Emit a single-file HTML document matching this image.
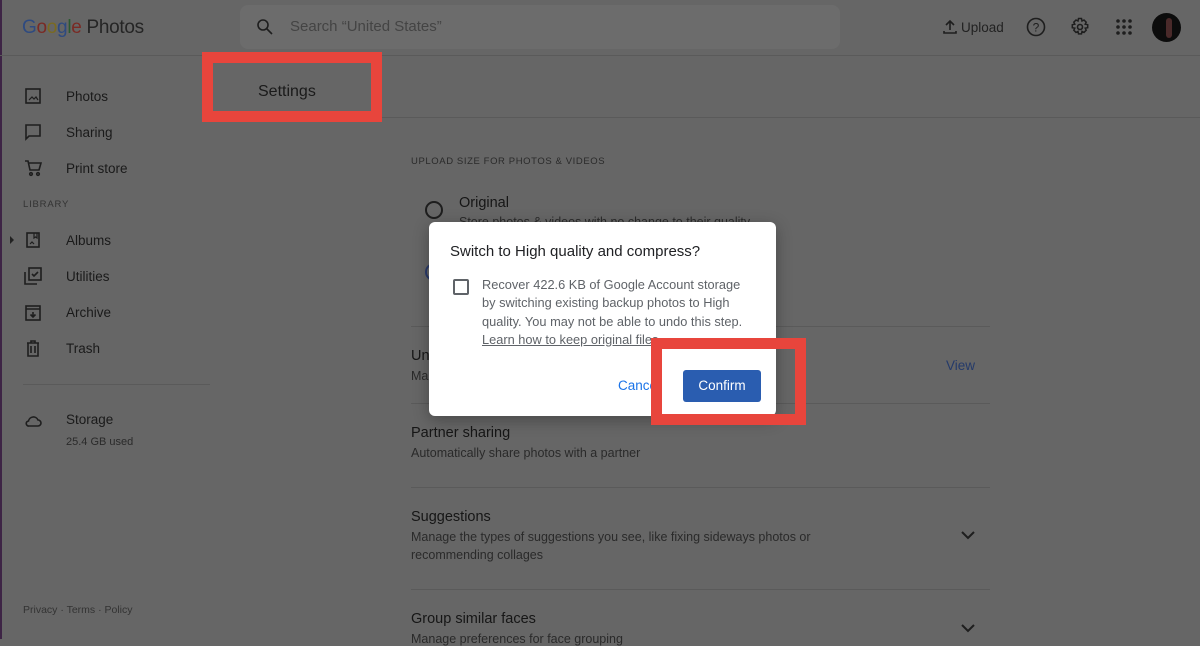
<!DOCTYPE html>
<html><head><style>
*{margin:0;padding:0;box-sizing:border-box}
body{width:1200px;height:639px;overflow:hidden;background:#666;font-family:"Liberation Sans",sans-serif;color:#141414;position:relative}
.a{position:absolute;white-space:nowrap}
.line{position:absolute;height:1px;background:#5a5a5a}
.nav{font-size:13.5px;color:#1a1a1a}
.ic{position:absolute;width:18px;height:18px;fill:none;stroke:#1e1e1e;stroke-width:1.6}
.sub{font-size:12.5px;color:#2a2a2a}
.h{font-size:14.5px;color:#161616}
.red{position:absolute;border:11px solid #e8453c}
</style></head><body>
<div class="a" style="left:0;top:0;width:2px;height:639px;background:#3d2445"></div>
<div class="a" style="left:22px;top:17px;font-size:19px;letter-spacing:-0.3px"><span style="color:#2e4a80">G</span><span style="color:#7a2a24">o</span><span style="color:#7a6a20">o</span><span style="color:#2e4a80">g</span><span style="color:#2a5a30">l</span><span style="color:#7a2a24">e</span> <span style="color:#252525">Photos</span></div>
<div class="a" style="left:240px;top:5px;width:600px;height:44px;background:#6c6c6c;border-radius:8px"></div>
<svg class="ic" style="left:256px;top:18px" viewBox="0 0 18 18"><circle cx="7" cy="7" r="5"/><path d="M11 11l5 5"/></svg>
<div class="a" style="left:290px;top:18px;font-size:15px;color:#444">Search “United States”</div>
<svg class="ic" style="left:942px;top:19px;width:16px;height:16px" viewBox="0 0 16 16"><path d="M8 11V3M4 6l4-4 4 4M2 12v2h12v-2"/></svg>
<div class="a" style="left:961px;top:20px;font-size:13.5px;color:#222">Upload</div>
<svg class="ic" style="left:1026px;top:17px;width:20px;height:20px" viewBox="0 0 20 20"><circle cx="10" cy="10" r="8.5"/><text x="10" y="14.5" font-size="12" text-anchor="middle" fill="#1e1e1e" stroke="none" font-family="Liberation Sans">?</text></svg>
<svg class="ic" style="left:1070px;top:17px;width:20px;height:20px" viewBox="0 0 20 20"><circle cx="10" cy="10" r="2.5"/><path d="M8.5 1.5h3l.5 2.5 2-1 2.2 2.2-1 2 2.5.5v3l-2.5.5 1 2-2.2 2.2-2-1-.5 2.5h-3l-.5-2.5-2 1-2.2-2.2 1-2-2.5-.5v-3l2.5-.5-1-2L6 3l2 1z" stroke-width="1.5"/></svg>
<svg class="a" style="left:1116px;top:19px" width="16" height="16" viewBox="0 0 16 16" fill="#1e1e1e"><circle cx="2" cy="2" r="1.8"/><circle cx="8" cy="2" r="1.8"/><circle cx="14" cy="2" r="1.8"/><circle cx="2" cy="8" r="1.8"/><circle cx="8" cy="8" r="1.8"/><circle cx="14" cy="8" r="1.8"/><circle cx="2" cy="14" r="1.8"/><circle cx="8" cy="14" r="1.8"/><circle cx="14" cy="14" r="1.8"/></svg>
<div class="a" style="left:1152px;top:13px;width:29px;height:29px;border-radius:50%;background:#0c0c0c"></div>
<div class="a" style="left:1166px;top:18px;width:6px;height:20px;background:#4a2a2a;border-radius:3px"></div>
<div class="line" style="left:0;top:55px;width:1200px"></div>
<div class="line" style="left:382px;top:117px;width:818px"></div>

<svg class="ic" style="left:24px;top:87px" viewBox="0 0 18 18"><rect x="2" y="2" width="14" height="14"/><path d="M5 13l3-3 2 2 2-2 2 3" stroke-width="1.2"/></svg>
<div class="a nav" style="left:66px;top:89px">Photos</div>
<svg class="ic" style="left:24px;top:123px" viewBox="0 0 18 18"><path d="M2 2h14v11H5l-3 3z"/></svg>
<div class="a nav" style="left:66px;top:125px">Sharing</div>
<svg class="ic" style="left:24px;top:159px" viewBox="0 0 18 18"><path d="M1 2h3l2 9h9l2-7H5"/><circle cx="7" cy="15" r="1.3"/><circle cx="14" cy="15" r="1.3"/></svg>
<div class="a nav" style="left:66px;top:161px">Print store</div>
<div class="a" style="left:23px;top:199px;font-size:9.5px;letter-spacing:0.8px;color:#333">LIBRARY</div>
<div class="a" style="left:10px;top:236px;width:0;height:0;border-left:4px solid #222;border-top:4px solid transparent;border-bottom:4px solid transparent"></div>
<svg class="ic" style="left:24px;top:231px" viewBox="0 0 18 18"><rect x="3" y="2" width="12" height="14"/><path d="M10 2v5l1.5-1 1.5 1V2M6 13l2-2 2 2" stroke-width="1.2"/></svg>
<div class="a nav" style="left:66px;top:233px">Albums</div>
<svg class="ic" style="left:24px;top:267px" viewBox="0 0 18 18"><rect x="5" y="1" width="12" height="12"/><path d="M1 5v12h12M8 7l2 2 4-4"/></svg>
<div class="a nav" style="left:66px;top:269px">Utilities</div>
<svg class="ic" style="left:24px;top:304px" viewBox="0 0 18 18"><rect x="2" y="2" width="14" height="14"/><path d="M2 5h14M9 8v5M6.5 10.5L9 13l2.5-2.5"/></svg>
<div class="a nav" style="left:66px;top:305px">Archive</div>
<svg class="ic" style="left:24px;top:340px" viewBox="0 0 18 18"><path d="M3 3h12M4 3v13h10V3M7 6v7M11 6v7M7 3V1h4v2"/></svg>
<div class="a nav" style="left:66px;top:341px">Trash</div>
<div class="line" style="left:23px;top:384px;width:187px"></div>
<svg class="ic" style="left:24px;top:412px" viewBox="0 0 18 18"><path d="M5 14h9a3 3 0 0 0 0-6 5 5 0 0 0-9.5 1A2.5 2.5 0 0 0 5 14z"/></svg>
<div class="a nav" style="left:66px;top:412px">Storage</div>
<div class="a" style="left:66px;top:436px;font-size:11px;color:#2a2a2a">25.4 GB used</div>
<div class="a" style="left:23px;top:604px;font-size:10.5px;color:#333">Privacy · Terms · Policy</div>

<div class="a" style="left:258px;top:83px;font-size:16px;color:#1a1a1a">Settings</div>
<div class="red" style="left:202px;top:52px;width:180px;height:70px"></div>

<div class="a" style="left:411px;top:156px;font-size:9.5px;letter-spacing:0.6px;color:#2a2a2a">UPLOAD SIZE FOR PHOTOS &amp; VIDEOS</div>
<div class="a" style="left:425px;top:201px;width:18px;height:18px;border:2px solid #1e1e1e;border-radius:50%"></div>
<div class="a h" style="left:459px;top:195px">Original</div>
<div class="a sub" style="left:459px;top:215px">Store photos &amp; videos with no change to their quality</div>
<div class="a" style="left:425px;top:263px;width:18px;height:18px;border:2px solid #2a3a6a;border-radius:50%"></div>
<div class="line" style="left:411px;top:326px;width:579px"></div>
<div class="a h" style="left:411px;top:348px">Unsupported videos</div>
<div class="a sub" style="left:411px;top:369px">Manage</div>
<div class="a" style="left:946px;top:358px;font-size:13.5px;color:#243a6a">View</div>
<div class="line" style="left:411px;top:403px;width:579px"></div>
<div class="a h" style="left:411px;top:425px">Partner sharing</div>
<div class="a sub" style="left:411px;top:446px">Automatically share photos with a partner</div>
<div class="line" style="left:411px;top:487px;width:579px"></div>
<div class="a h" style="left:411px;top:509px">Suggestions</div>
<div class="a sub" style="left:411px;top:530px">Manage the types of suggestions you see, like fixing sideways photos or</div>
<div class="a sub" style="left:411px;top:548px">recommending collages</div>
<svg class="ic" style="left:959px;top:526px" viewBox="0 0 18 18"><path d="M3 6l6 6 6-6" stroke-width="2"/></svg>
<div class="line" style="left:411px;top:589px;width:579px"></div>
<div class="a h" style="left:411px;top:611px">Group similar faces</div>
<div class="a sub" style="left:411px;top:632px">Manage preferences for face grouping</div>
<svg class="ic" style="left:959px;top:619px" viewBox="0 0 18 18"><path d="M3 6l6 6 6-6" stroke-width="2"/></svg>

<div class="a" style="left:429px;top:222px;width:347px;height:194px;background:#fff;border-radius:6px;box-shadow:0 4px 16px rgba(0,0,0,.3)"></div>
<div class="a" style="left:450px;top:243px;font-size:15px;color:#202124">Switch to High quality and compress?</div>
<div class="a" style="left:453px;top:279px;width:16px;height:16px;border:2px solid #5f6368;border-radius:2px"></div>
<div class="a" style="left:482px;top:276px;font-size:12.8px;line-height:18.3px;color:#5f6368">Recover 422.6 KB of Google Account storage<br>by switching existing backup photos to High<br>quality. You may not be able to undo this step.<br><span style="text-decoration:underline">Learn how to keep original files</span></div>
<div class="a" style="left:618px;top:378px;font-size:13.5px;color:#1a73e8">Cancel</div>
<div class="a" style="left:683px;top:370px;width:78px;height:32px;background:#2a5db0;border-radius:3px;color:#fff;font-size:13.5px;text-align:center;line-height:32px">Confirm</div>
<div class="red" style="left:651px;top:338px;width:155px;height:87px"></div>
</body></html>
